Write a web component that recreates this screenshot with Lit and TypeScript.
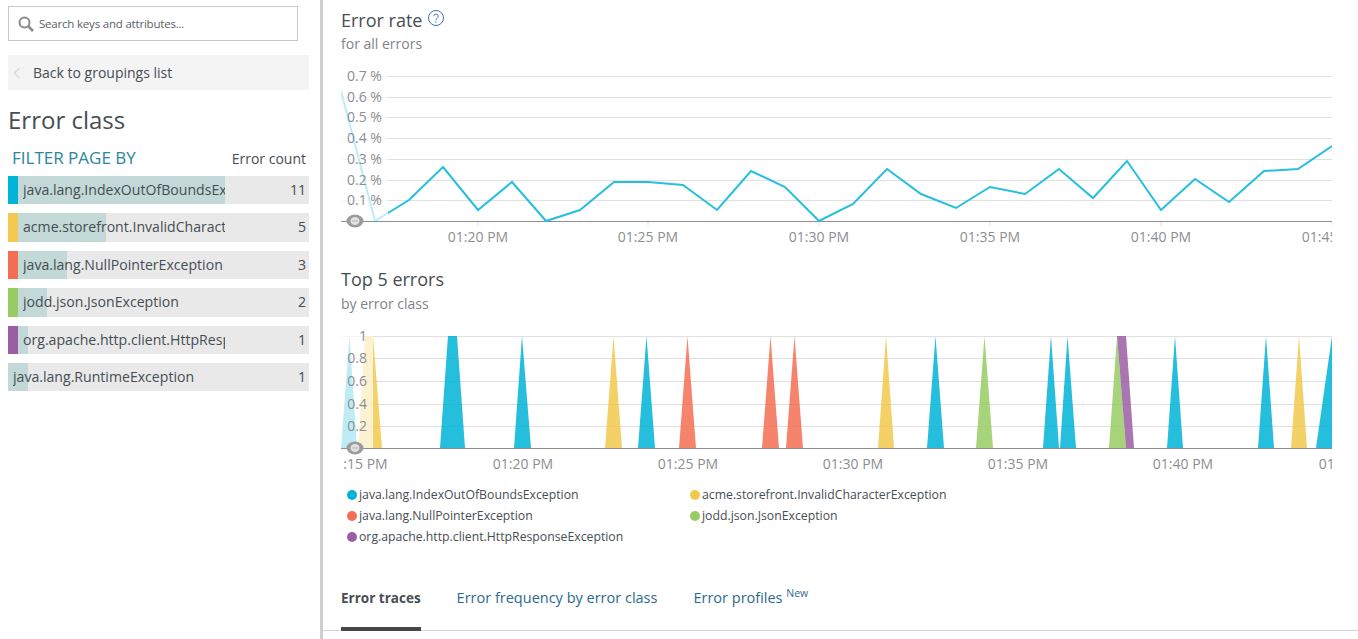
import { LitElement, html, css, svg } from 'lit';
import { customElement } from 'lit/decorators.js';

const BLUE = '#00b3d7';
const YELLOW = '#f2c94c';
const RED = '#f46e54';
const GREEN = '#98cc63';
const PURPLE = '#9b5ea5';

const FILTERS = [
  { name: 'java.lang.IndexOutOfBoundsException', count: 11, fill: 207, color: BLUE },
  { name: 'acme.storefront.InvalidCharacterException', count: 5, fill: 88, color: YELLOW },
  { name: 'java.lang.NullPointerException', count: 3, fill: 49, color: RED },
  { name: 'jodd.json.JsonException', count: 2, fill: 29, color: GREEN },
  { name: 'org.apache.http.client.HttpResponseException', count: 1, fill: 10, color: PURPLE },
  { name: 'java.lang.RuntimeException', count: 1, fill: 20, color: '' },
];

const LEGEND = [
  { name: 'java.lang.IndexOutOfBoundsException', color: BLUE },
  { name: 'acme.storefront.InvalidCharacterException', color: YELLOW },
  { name: 'java.lang.NullPointerException', color: RED },
  { name: 'jodd.json.JsonException', color: GREEN },
  { name: 'org.apache.http.client.HttpResponseException', color: PURPLE },
];

const RATE_POINTS =
  '341,91 375,221 409,200 443,167 478,210 512,182 546,221 580,210 614,182 648,182 683,185 717,210 751,171 785,187 819,221 853,204 887,169 921,194 956,208 990,187 1025,194 1059,169 1093,198 1127,161 1161,210 1195,179 1229,202 1264,171 1298,169 1332,146';

const RATE_GRID = [76, 97, 117, 138, 159, 180, 200];
const RATE_LABELS = ['0.7 %', '0.6 %', '0.5 %', '0.4 %', '0.3 %', '0.2 %', '0.1 %'];
const RATE_TICKS = [
  [478, '01:20 PM'],
  [648, '01:25 PM'],
  [819, '01:30 PM'],
  [990, '01:35 PM'],
  [1161, '01:40 PM'],
  [1332, '01:45 PM'],
] as const;

const TOP_GRID = [336, 358, 381, 404, 426];
const TOP_LABELS = ['1', '0.8', '0.6', '0.4', '0.2'];
const TOP_TICKS = [
  [357.5, '01:15 PM'],
  [523, '01:20 PM'],
  [688, '01:25 PM'],
  [853, '01:30 PM'],
  [1018, '01:35 PM'],
  [1183, '01:40 PM'],
  [1349, '01:45 PM'],
] as const;

// peaks of the stacked chart, [polygon points, colour]
const PEAKS: [string, string][] = [
  ['341,448 349.5,336 357,448', BLUE],
  ['358,448 365,336 373,336 382,448', YELLOW],
  ['440,448 448,336 457,336 465,448', BLUE],
  ['514,448 522,336 531,448', BLUE],
  ['605,448 613.5,336 622,448', YELLOW],
  ['638,448 646.5,336 655,448', BLUE],
  ['679,448 687.5,336 696,448', RED],
  ['762,448 770.5,336 779,448', RED],
  ['786,448 794.5,336 803,448', RED],
  ['878,448 886,336 894,448', YELLOW],
  ['927,448 935.5,336 944,448', BLUE],
  ['976,448 984.5,336 993,448', GREEN],
  ['1043,448 1051,336 1059,448', BLUE],
  ['1060,448 1067.5,336 1076,448', BLUE],
  ['1109,448 1117,336 1126,448', GREEN],
  ['1117,336 1126,336 1134,448 1126,448', PURPLE],
  ['1167,448 1175,336 1183,448', BLUE],
  ['1258,448 1266,336 1274,448', BLUE],
  ['1291,448 1299,336 1307,448', YELLOW],
  ['1316,448 1332,336 1332,448', BLUE],
];

const handle = (x: number, y: number) => svg`
  <ellipse cx=${x} cy=${y} rx="8.5" ry="6.5" fill="#9c9c9c"></ellipse>
  <ellipse cx=${x} cy=${y} rx="4.5" ry="4" fill="#e2e2e2"></ellipse>
  <line x1=${x - 3} x2=${x + 3} y1=${y} y2=${y} stroke="#b5b5b5"></line>
`;

@customElement('filter-row')
class FilterRow extends LitElement {
  static properties = {
    name: {},
    count: { type: Number },
    fill: { type: Number },
    color: {},
  };

  name = '';
  count = 0;
  fill = 0;
  color = '';

  static styles = css`
    :host {
      display: flex;
      height: 28.4px;
      background: #e9e9e9;
      font-size: 14.1px;
      line-height: 28px;
      color: #464e54;
    }

    .swatch {
      flex: 0 0 10px;
    }

    .body {
      flex: 1;
      display: flex;
      min-width: 0;
      background-repeat: no-repeat;
      background-image: linear-gradient(#c2d9d7, #c2d9d7);
    }

    .name {
      width: 202px;
      margin-left: 5px;
      overflow: hidden;
      white-space: nowrap;
    }

    .name_plain {
      width: 212px;
    }

    .count {
      flex: 1;
      text-align: right;
      padding-right: 3px;
    }
  `;

  render() {
    return html`
      ${this.color
        ? html`<div class="swatch" style="background: ${this.color}"></div>`
        : ''}
      <div class="body" style="background-size: ${this.fill}px 100%">
        <div class="name ${this.color ? '' : 'name_plain'}">${this.name}</div>
        <div class="count">${this.count}</div>
      </div>
    `;
  }
}

@customElement('app-root')
class AppRoot extends LitElement {
  static styles = css`
    :host {
      display: flex;
      height: 639px;
      overflow: hidden;
      background: #fff;
      font-family: 'Open Sans', 'Liberation Sans', sans-serif;
      color: #464e54;
    }

    /* Sidebar */
    .sidebar {
      flex: 0 0 320px;
      box-sizing: border-box;
      padding: 6px 11px 0 8px;
    }

    .divider {
      flex: 0 0 3px;
      background: #cfcfcf;
    }

    .search {
      box-sizing: border-box;
      width: 290px;
      height: 35px;
      display: flex;
      align-items: center;
      gap: 5px;
      padding-left: 9px;
      border: 1px solid #c9c9c9;
      font-size: 11.5px;
      letter-spacing: -0.2px;
      color: #5b6166;
    }

    .back {
      height: 35px;
      margin-top: 14px;
      display: flex;
      align-items: center;
      gap: 12px;
      padding-left: 5px;
      background: #f4f4f4;
      font-size: 14px;
    }

    .title {
      margin: 13px 0 0;
      font-size: 24px;
      font-weight: 400;
      line-height: 34px;
    }

    .filter-head {
      display: flex;
      justify-content: space-between;
      align-items: baseline;
      margin-top: 9px;
      padding: 0 3px 0 4px;
      height: 25px;
      font-size: 14px;
    }

    .filter-head__label {
      font-size: 17px;
      color: #2a86a0;
    }

    .filters {
      display: flex;
      flex-direction: column;
      gap: 9px;
      margin-top: 5px;
    }

    /* Main column */
    .main {
      flex: 1;
      min-width: 0;
    }

    .heading {
      padding-left: 18px;
      display: flex;
      align-items: center;
      gap: 5px;
      font-size: 18px;
      line-height: 24px;
    }

    .heading__help {
      margin-top: -4px;
    }

    .subheading {
      padding-left: 18px;
      font-size: 14px;
      line-height: 20px;
      color: #808488;
    }

    .chart {
      display: block;
    }

    .chart text {
      font-family: 'Open Sans', 'Liberation Sans', sans-serif;
      font-size: 14px;
      fill: #8b8e93;
    }

    .rate-head {
      margin-top: 8px;
    }

    .rate-sub {
      margin-top: 2px;
    }

    .rate-chart {
      margin-top: 6px;
    }

    .top-head {
      margin-top: 17px;
    }

    .top-sub {
      margin-top: 3px;
    }

    .top-chart {
      margin-top: 11px;
    }

    .legend {
      display: grid;
      grid-template-columns: 343px auto;
      justify-content: start;
      row-gap: 3px;
      margin: 11px 0 0 24px;
      font-size: 12.25px;
      line-height: 18px;
    }

    .legend__item {
      display: flex;
      align-items: center;
      gap: 2px;
    }

    .legend__dot {
      width: 10px;
      height: 10px;
      border-radius: 50%;
    }

    .tabs {
      margin-top: 39px;
      height: 46px;
      display: flex;
      gap: 36px;
      padding-left: 18px;
      border-bottom: 1px solid #d5d5d5;
      box-sizing: border-box;
      font-size: 14.5px;
      color: #2c6a8f;
    }

    .tab {
      height: 46px;
      line-height: 26px;
      box-sizing: border-box;
    }

    .tab_active {
      font-size: 13.5px;
      font-weight: 700;
      color: #464e54;
      border-bottom: 4px solid #464646;
    }

    .tab sup {
      font-size: 10.5px;
      line-height: 0;
    }
  `;

  renderRateChart() {
    return html`
      <svg class="chart rate-chart" width="1035" height="190" viewBox="323 60 1035 190">
        <defs>
          <clipPath id="rate-clip"><rect x="341" y="60" width="991" height="190"></rect></clipPath>
        </defs>
        ${RATE_GRID.map(
          (y) => svg`<line x1="341" x2="1332" y1=${y + 0.5} y2=${y + 0.5} stroke="#dfe0e0"></line>`
        )}
        <line x1="341" x2="1332" y1="221.5" y2="221.5" stroke="#8e8e8e"></line>
        <g clip-path="url(#rate-clip)">
          ${RATE_TICKS.map(
            ([x, label]) => svg`
              <line x1=${x} x2=${x} y1="222" y2="226" stroke="#dfe0e0"></line>
              <text x=${x} y="242" text-anchor="middle">${label}</text>
            `
          )}
          <polyline points=${RATE_POINTS} fill="none" stroke="#26bfde" stroke-width="2"></polyline>
          <rect x="341" y="60" width="47" height="161" fill="#fff" opacity="0.7"></rect>
        </g>
        ${RATE_LABELS.map(
          (label, i) => svg`<text x="347" y=${RATE_GRID[i] + 5}>${label}</text>`
        )}
        ${handle(355, 221)}
      </svg>
    `;
  }

  renderTopChart() {
    return html`
      <svg class="chart top-chart" width="1035" height="150" viewBox="323 325 1035 150">
        <defs>
          <clipPath id="top-clip"><rect x="341" y="330" width="991" height="145"></rect></clipPath>
        </defs>
        ${TOP_GRID.map(
          (y) => svg`<line x1="341" x2="1332" y1=${y + 0.5} y2=${y + 0.5} stroke="#dfe0e0"></line>`
        )}
        ${PEAKS.map(
          ([points, color]) => svg`<polygon points=${points} fill=${color} opacity="0.85"></polygon>`
        )}
        <rect x="341" y="336" width="32" height="112" fill="#fff" opacity="0.7"></rect>
        ${TOP_LABELS.map(
          (label, i) => svg`<text x="367" y=${TOP_GRID[i] + 5} text-anchor="end">${label}</text>`
        )}
        <line x1="341" x2="1332" y1="448.5" y2="448.5" stroke="#8e8e8e"></line>
        <g clip-path="url(#top-clip)">
          ${TOP_TICKS.map(
            ([x, label]) => svg`<text x=${x} y="469" text-anchor="middle">${label}</text>`
          )}
        </g>
        ${handle(355, 448)}
      </svg>
    `;
  }

  render() {
    return html`
      <aside class="sidebar">
        <div class="search">
          <svg width="16" height="16" viewBox="0 0 16 16">
            <circle cx="6.5" cy="6.5" r="5" fill="none" stroke="#8a8a8a" stroke-width="2"></circle>
            <path d="M10.4 10.4 15 15" stroke="#8a8a8a" stroke-width="2.6" fill="none"></path>
          </svg>
          Search keys and attributes...
        </div>
        <div class="back">
          <svg width="8" height="12" viewBox="0 0 8 12">
            <path d="M6.5 1 1.5 6l5 5" fill="none" stroke="#c4c4c4" stroke-width="1"></path>
          </svg>
          Back to groupings list
        </div>
        <h2 class="title">Error class</h2>
        <div class="filter-head">
          <span class="filter-head__label">FILTER PAGE BY</span>
          <span>Error count</span>
        </div>
        <div class="filters">
          ${FILTERS.map(
            (f) => html`<filter-row
              .name=${f.name}
              .count=${f.count}
              .fill=${f.fill}
              .color=${f.color}
            ></filter-row>`
          )}
        </div>
      </aside>
      <div class="divider"></div>
      <main class="main">
        <div class="heading rate-head">
          Error rate
          <svg class="heading__help" width="18" height="18" viewBox="0 0 18 18">
            <circle cx="9" cy="9" r="7.5" fill="none" stroke="#4a6fb8" stroke-width="1"></circle>
            <path d="M6.8 7.2a2.2 2.2 0 1 1 3.4 1.9c-.8.5-1.2 1-1.2 1.9" fill="none" stroke="#4a6fb8" stroke-width="1"></path>
            <circle cx="9" cy="13" r=".7" fill="#4a6fb8"></circle>
          </svg>
        </div>
        <div class="subheading rate-sub">for all errors</div>
        ${this.renderRateChart()}
        <div class="heading top-head">Top 5 errors</div>
        <div class="subheading top-sub">by error class</div>
        ${this.renderTopChart()}
        <div class="legend">
          ${LEGEND.map(
            (item) => html`
              <div class="legend__item">
                <span class="legend__dot" style="background: ${item.color}"></span>
                ${item.name}
              </div>
            `
          )}
        </div>
        <nav class="tabs">
          <div class="tab tab_active">Error traces</div>
          <div class="tab">Error frequency by error class</div>
          <div class="tab">Error profiles <sup>New</sup></div>
        </nav>
      </main>
    `;
  }
}
